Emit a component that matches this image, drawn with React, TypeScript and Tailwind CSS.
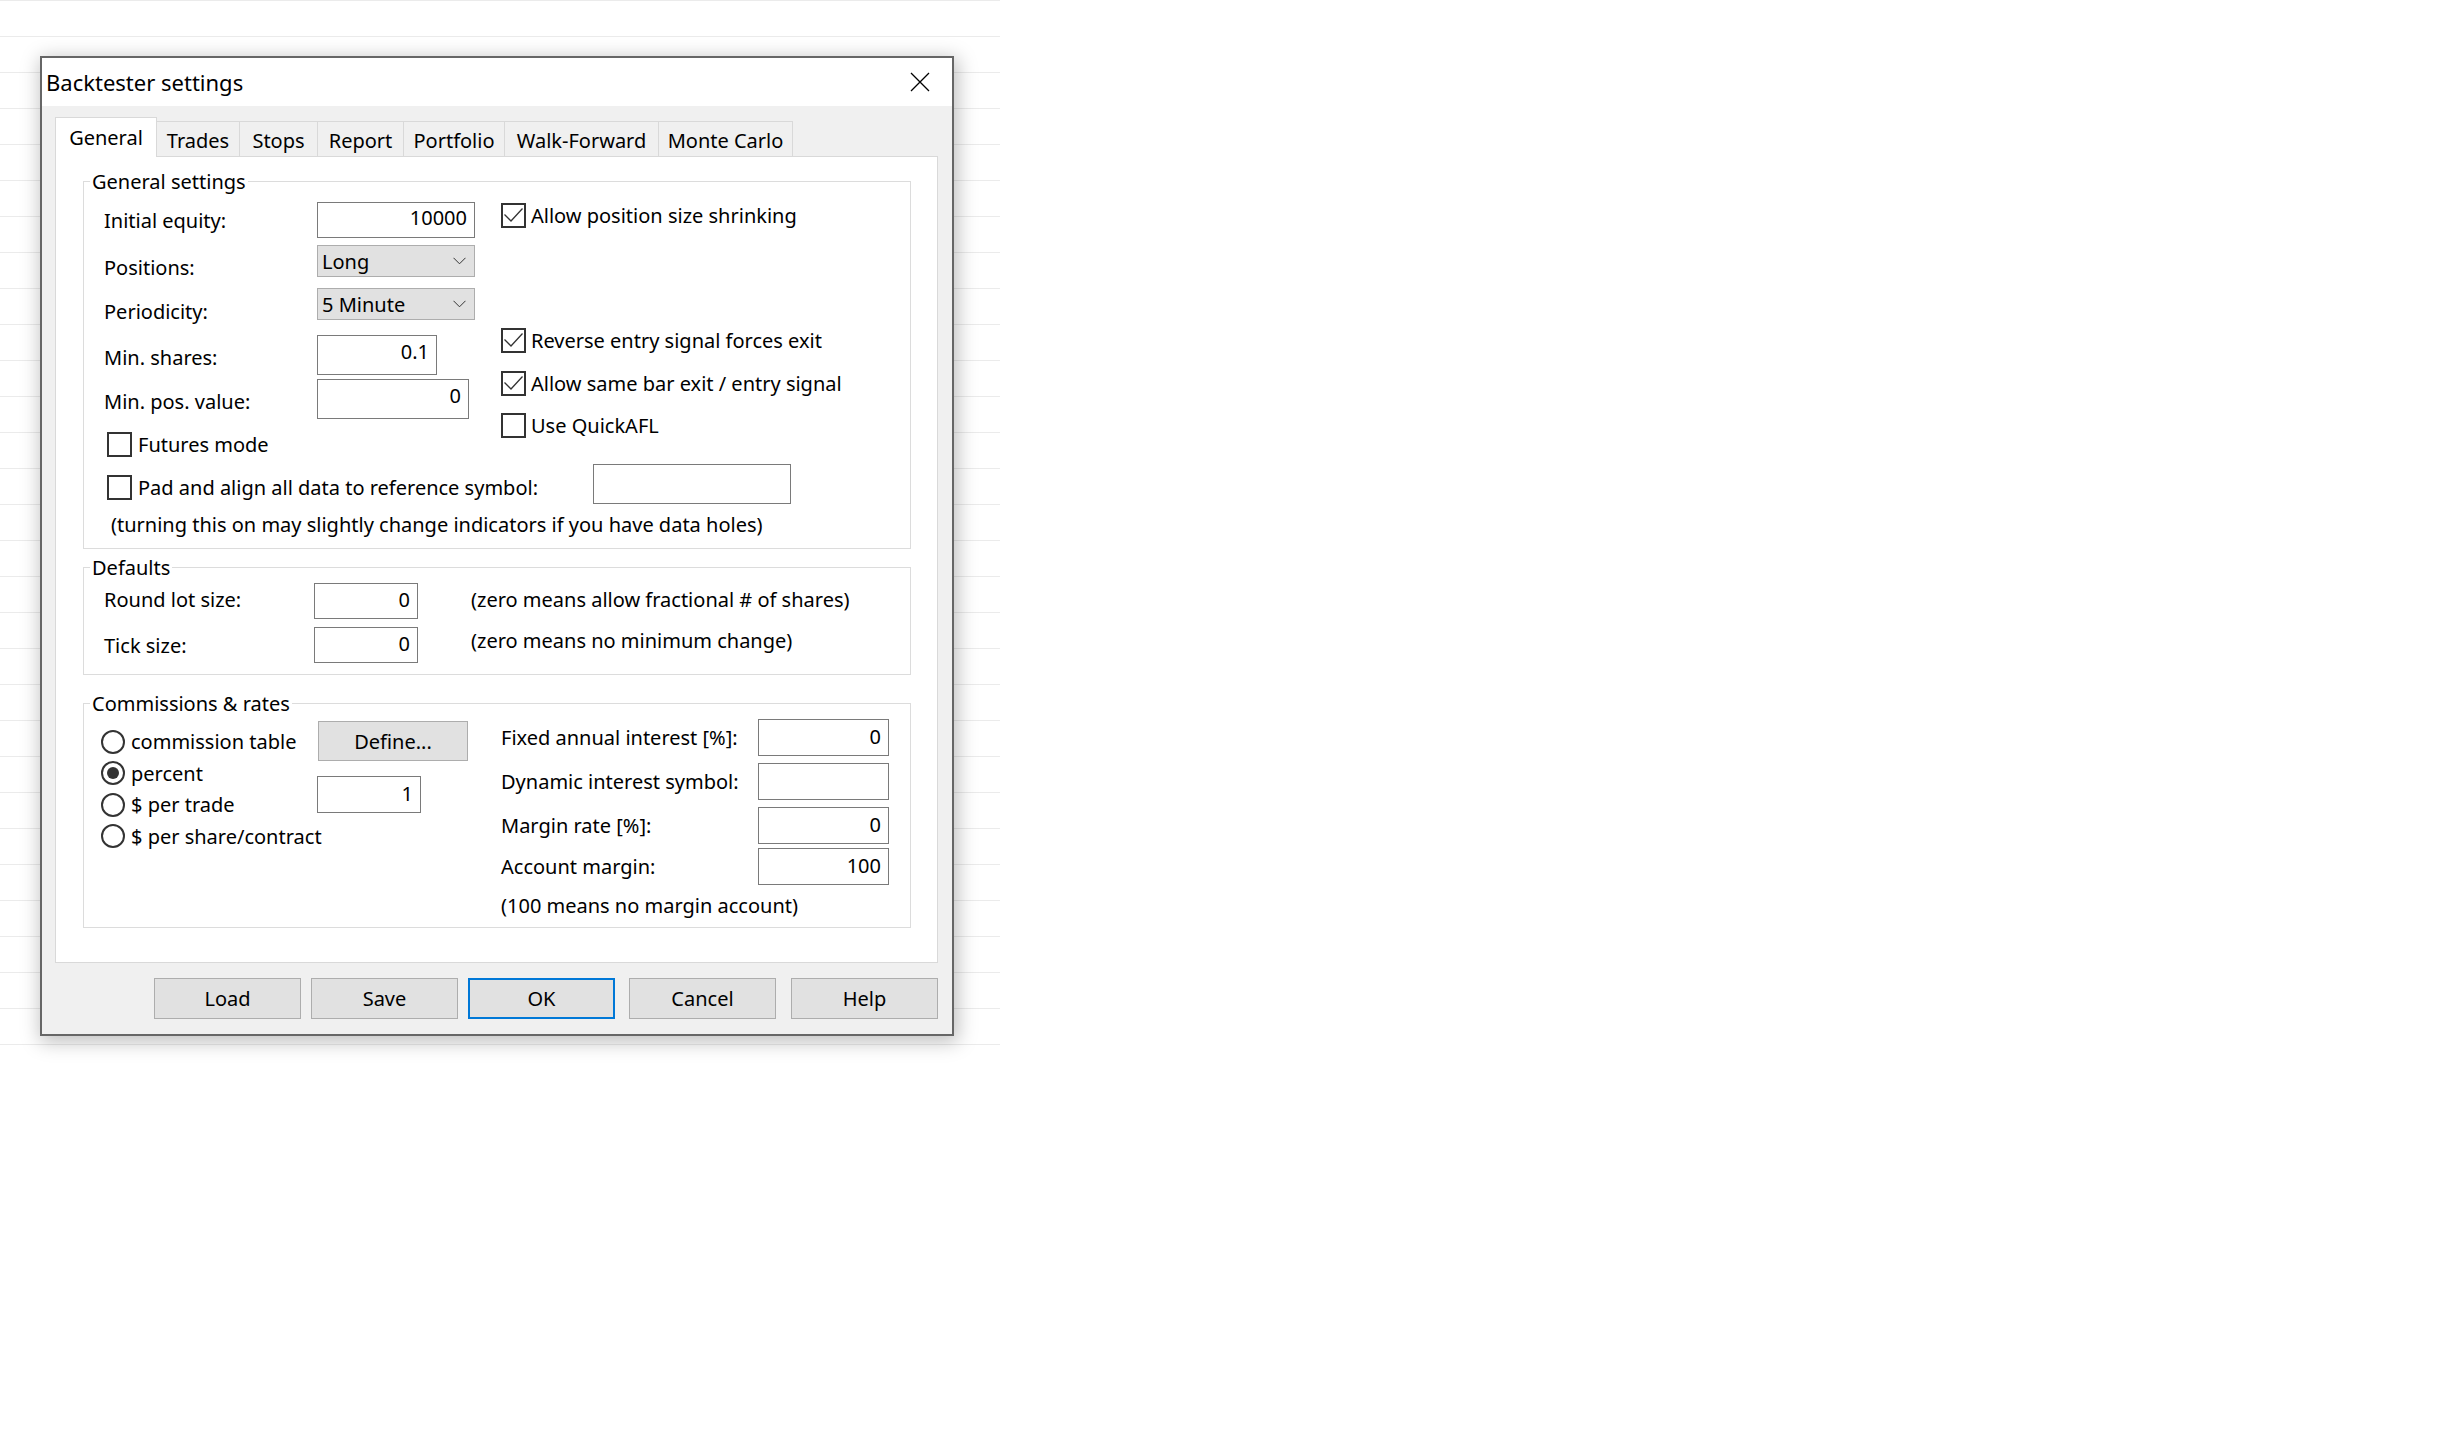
import React from "react";

function Check({ checked }: { checked?: boolean }) {
  return (
    <span className="w-[25px] h-[25px] border-2 border-[#333333] bg-white flex items-center justify-center shrink-0">
      {checked && (
        <svg width="21" height="21" viewBox="0 0 21 21">
          <polyline points="1.5,9.5 8,16 19.5,3.5" fill="none" stroke="#333333" strokeWidth="1.3" />
        </svg>
      )}
    </span>
  );
}

function Radio({ on }: { on?: boolean }) {
  return (
    <span className="w-[24px] h-[24px] rounded-full border-2 border-[#333333] bg-white flex items-center justify-center shrink-0">
      {on && <span className="w-[12px] h-[12px] rounded-full bg-[#333333]" />}
    </span>
  );
}

function Input({ className, children }: { className: string; children?: React.ReactNode }) {
  return (
    <div className={`${className} shrink-0 border border-[#7a7a7a] bg-white flex items-center justify-end pr-[7px]`}>
      {children}
    </div>
  );
}

function Combo({ value }: { value: string }) {
  return (
    <div className="w-[158px] h-[32px] shrink-0 border border-[#adadad] bg-[#e1e1e1] flex items-center justify-between pl-[4px] pr-[8px]">
      <span>{value}</span>
      <svg width="13" height="8" viewBox="0 0 13 8">
        <polyline points="0.5,0.8 6.5,6.8 12.5,0.8" fill="none" stroke="#333333" strokeWidth="1" />
      </svg>
    </div>
  );
}

function Btn({ children, primary, className }: { children: React.ReactNode; primary?: boolean; className?: string }) {
  return (
    <div
      className={`${className ?? ""} w-[147px] h-[41px] bg-[#e1e1e1] flex items-center justify-center ${
        primary ? "border-2 border-[#0078d7]" : "border border-[#adadad]"
      }`}
    >
      {children}
    </div>
  );
}

export default function App() {
  return (
    <div className="w-full min-h-screen bg-white font-['Noto_Sans',sans-serif] text-black text-[20px] leading-[27px] whitespace-nowrap">
      <div className="w-[1000px] h-[1045px] pt-[56px] pl-[40px] bg-[repeating-linear-gradient(to_bottom,#ebebeb_0px,#ebebeb_1px,transparent_1px,transparent_36px)]">
        <div className="w-[914px] h-[980px] border-2 border-[#666666] bg-[#f0f0f0] shadow-[2px_4px_18px_2px_rgba(0,0,0,0.25)] flex flex-col">
          {/* Title bar */}
          <div className="h-[48px] shrink-0 bg-white flex items-center justify-between pl-[4px] pr-[22px]">
            <span className="text-[22px]">Backtester settings</span>
            <svg width="20" height="20" viewBox="0 0 20 20">
              <path d="M1 1L19 19M19 1L1 19" stroke="#000000" strokeWidth="1.3" fill="none" />
            </svg>
          </div>

          {/* Body */}
          <div className="flex-1 flex flex-col pt-[11px] pl-[13px] pr-[14px]">
            {/* Tabs */}
            <div className="flex items-end h-[40px] relative z-10 -mb-px">
              <div className="w-[102px] h-[40px] bg-white border-l border-t border-r border-[#d9d9d9] flex items-center justify-center">
                General
              </div>
              <div className="w-[83px] h-[36px] border-t border-r border-[#d9d9d9] flex items-center justify-center pt-[2px]">Trades</div>
              <div className="w-[78px] h-[36px] border-t border-r border-[#d9d9d9] flex items-center justify-center pt-[2px]">Stops</div>
              <div className="w-[86px] h-[36px] border-t border-r border-[#d9d9d9] flex items-center justify-center pt-[2px]">Report</div>
              <div className="w-[101px] h-[36px] border-t border-r border-[#d9d9d9] flex items-center justify-center pt-[2px]">Portfolio</div>
              <div className="w-[154px] h-[36px] border-t border-r border-[#d9d9d9] flex items-center justify-center pt-[2px]">Walk-Forward</div>
              <div className="w-[134px] h-[36px] border-t border-r border-[#d9d9d9] flex items-center justify-center pt-[2px]">Monte Carlo</div>
            </div>

            {/* Panel */}
            <div className="h-[807px] shrink-0 bg-white border border-[#d9d9d9] pl-[27px] pr-[26px]">
              {/* General settings */}
              <fieldset className="mt-[11px] h-[381px] min-w-0 border border-[#dcdcdc]">
                <legend className="ml-[6px] px-[2px] leading-[27px]">General settings</legend>
                <div className="pt-[7px] pl-[20px]">
                  <div className="flex">
                    <div className="w-[397px] flex flex-col">
                      <div className="flex items-center h-[36px]">
                        <span className="w-[213px]">Initial equity:</span>
                        <Input className="w-[158px] h-[36px] pb-[6px]">10000</Input>
                      </div>
                      <div className="flex items-center h-[32px] mt-[7px]">
                        <span className="w-[213px] pt-[12px]">Positions:</span>
                        <Combo value="Long" />
                      </div>
                      <div className="flex items-center h-[32px] mt-[11px]">
                        <span className="w-[213px] pt-[14px]">Periodicity:</span>
                        <Combo value="5 Minute" />
                      </div>
                      <div className="flex items-center h-[40px] mt-[15px]">
                        <span className="w-[213px] pt-[4px]">Min. shares:</span>
                        <Input className="w-[120px] h-[40px] pb-[8px]">0.1</Input>
                      </div>
                      <div className="flex items-center h-[40px] mt-[4px]">
                        <span className="w-[213px] pt-[4px]">Min. pos. value:</span>
                        <Input className="w-[152px] h-[40px] pb-[8px]">0</Input>
                      </div>
                      <div className="flex items-center h-[25px] mt-[13px] pl-[3px]">
                        <Check />
                        <span className="ml-[6px]">Futures mode</span>
                      </div>
                    </div>
                    <div className="flex flex-col pt-[1px]">
                      <div className="flex items-center h-[25px] gap-[5px]">
                        <Check checked />
                        <span>Allow position size shrinking</span>
                      </div>
                      <div className="flex items-center h-[25px] gap-[5px] mt-[100px]">
                        <Check checked />
                        <span>Reverse entry signal forces exit</span>
                      </div>
                      <div className="flex items-center h-[25px] gap-[5px] mt-[18px]">
                        <Check checked />
                        <span>Allow same bar exit / entry signal</span>
                      </div>
                      <div className="flex items-center h-[25px] gap-[5px] mt-[17px]">
                        <Check />
                        <span>Use QuickAFL</span>
                      </div>
                    </div>
                  </div>
                  <div className="flex items-start mt-[7px] h-[40px]">
                    <div className="w-[489px] flex items-center h-[25px] mt-[11px] pl-[3px]">
                      <Check />
                      <span className="ml-[6px]">Pad and align all data to reference symbol:</span>
                    </div>
                    <Input className="w-[198px] h-[40px]" />
                  </div>
                  <div className="mt-[7px] pl-[7px]">
                    (turning this on may slightly change indicators if you have data holes)
                  </div>
                </div>
              </fieldset>

              {/* Defaults */}
              <fieldset className="mt-[5px] h-[121px] min-w-0 border border-[#dcdcdc]">
                <legend className="ml-[6px] px-[2px] leading-[27px]">Defaults</legend>
                <div className="pt-[2px] pl-[20px] flex flex-col">
                  <div className="flex items-center h-[36px]">
                    <span className="w-[210px] pb-[3px]">Round lot size:</span>
                    <Input className="w-[104px] h-[36px] pb-[4px]">0</Input>
                    <span className="ml-[53px] pb-[3px]">(zero means allow fractional # of shares)</span>
                  </div>
                  <div className="flex items-center h-[36px] mt-[8px]">
                    <span className="w-[210px]">Tick size:</span>
                    <Input className="w-[104px] h-[36px] pb-[4px]">0</Input>
                    <span className="ml-[53px] pb-[10px]">(zero means no minimum change)</span>
                  </div>
                </div>
              </fieldset>

              {/* Commissions & rates */}
              <fieldset className="mt-[15px] h-[238px] min-w-0 border border-[#dcdcdc]">
                <legend className="ml-[6px] px-[2px] leading-[27px]">Commissions &amp; rates</legend>
                <div className="flex items-start pl-[17px]">
                  <div className="w-[216px] flex flex-col mt-[9px]">
                    <div className="flex items-center h-[31.5px]">
                      <Radio />
                      <span className="ml-[6px]">commission table</span>
                    </div>
                    <div className="flex items-center h-[31.5px]">
                      <Radio on />
                      <span className="ml-[6px]">percent</span>
                    </div>
                    <div className="flex items-center h-[31.5px]">
                      <Radio />
                      <span className="ml-[6px]">$ per trade</span>
                    </div>
                    <div className="flex items-center h-[31.5px]">
                      <Radio />
                      <span className="ml-[6px] whitespace-nowrap">$ per share/contract</span>
                    </div>
                  </div>
                  <div className="w-[184px] flex flex-col">
                    <div className="mt-[4px] ml-[1px] w-[150px] h-[40px] bg-[#e1e1e1] border border-[#adadad] flex items-center justify-center">
                      Define...
                    </div>
                    <Input className="w-[104px] h-[37px] mt-[15px] pb-[3px]">1</Input>
                  </div>
                  <div className="flex flex-col">
                    <div className="flex items-center h-[37px] mt-[2px]">
                      <span className="w-[257px]">Fixed annual interest [%]:</span>
                      <Input className="w-[131px] h-[37px] pb-[3px]">0</Input>
                    </div>
                    <div className="flex items-center h-[37px] mt-[7px]">
                      <span className="w-[257px]">Dynamic interest symbol:</span>
                      <Input className="w-[131px] h-[37px]" />
                    </div>
                    <div className="flex items-center h-[37px] mt-[7px]">
                      <span className="w-[257px]">Margin rate [%]:</span>
                      <Input className="w-[131px] h-[37px] pb-[3px]">0</Input>
                    </div>
                    <div className="flex items-center h-[37px] mt-[4px]">
                      <span className="w-[257px]">Account margin:</span>
                      <Input className="w-[131px] h-[37px] pb-[3px]">100</Input>
                    </div>
                    <div className="mt-[7px]">(100 means no margin account)</div>
                  </div>
                </div>
              </fieldset>
            </div>

            {/* Buttons */}
            <div className="flex justify-end mt-[15px]">
              <Btn>Load</Btn>
              <Btn className="ml-[10px]">Save</Btn>
              <Btn className="ml-[10px]" primary>
                OK
              </Btn>
              <Btn className="ml-[14px]">Cancel</Btn>
              <Btn className="ml-[15px]">Help</Btn>
            </div>
          </div>
        </div>
      </div>
    </div>
  );
}
